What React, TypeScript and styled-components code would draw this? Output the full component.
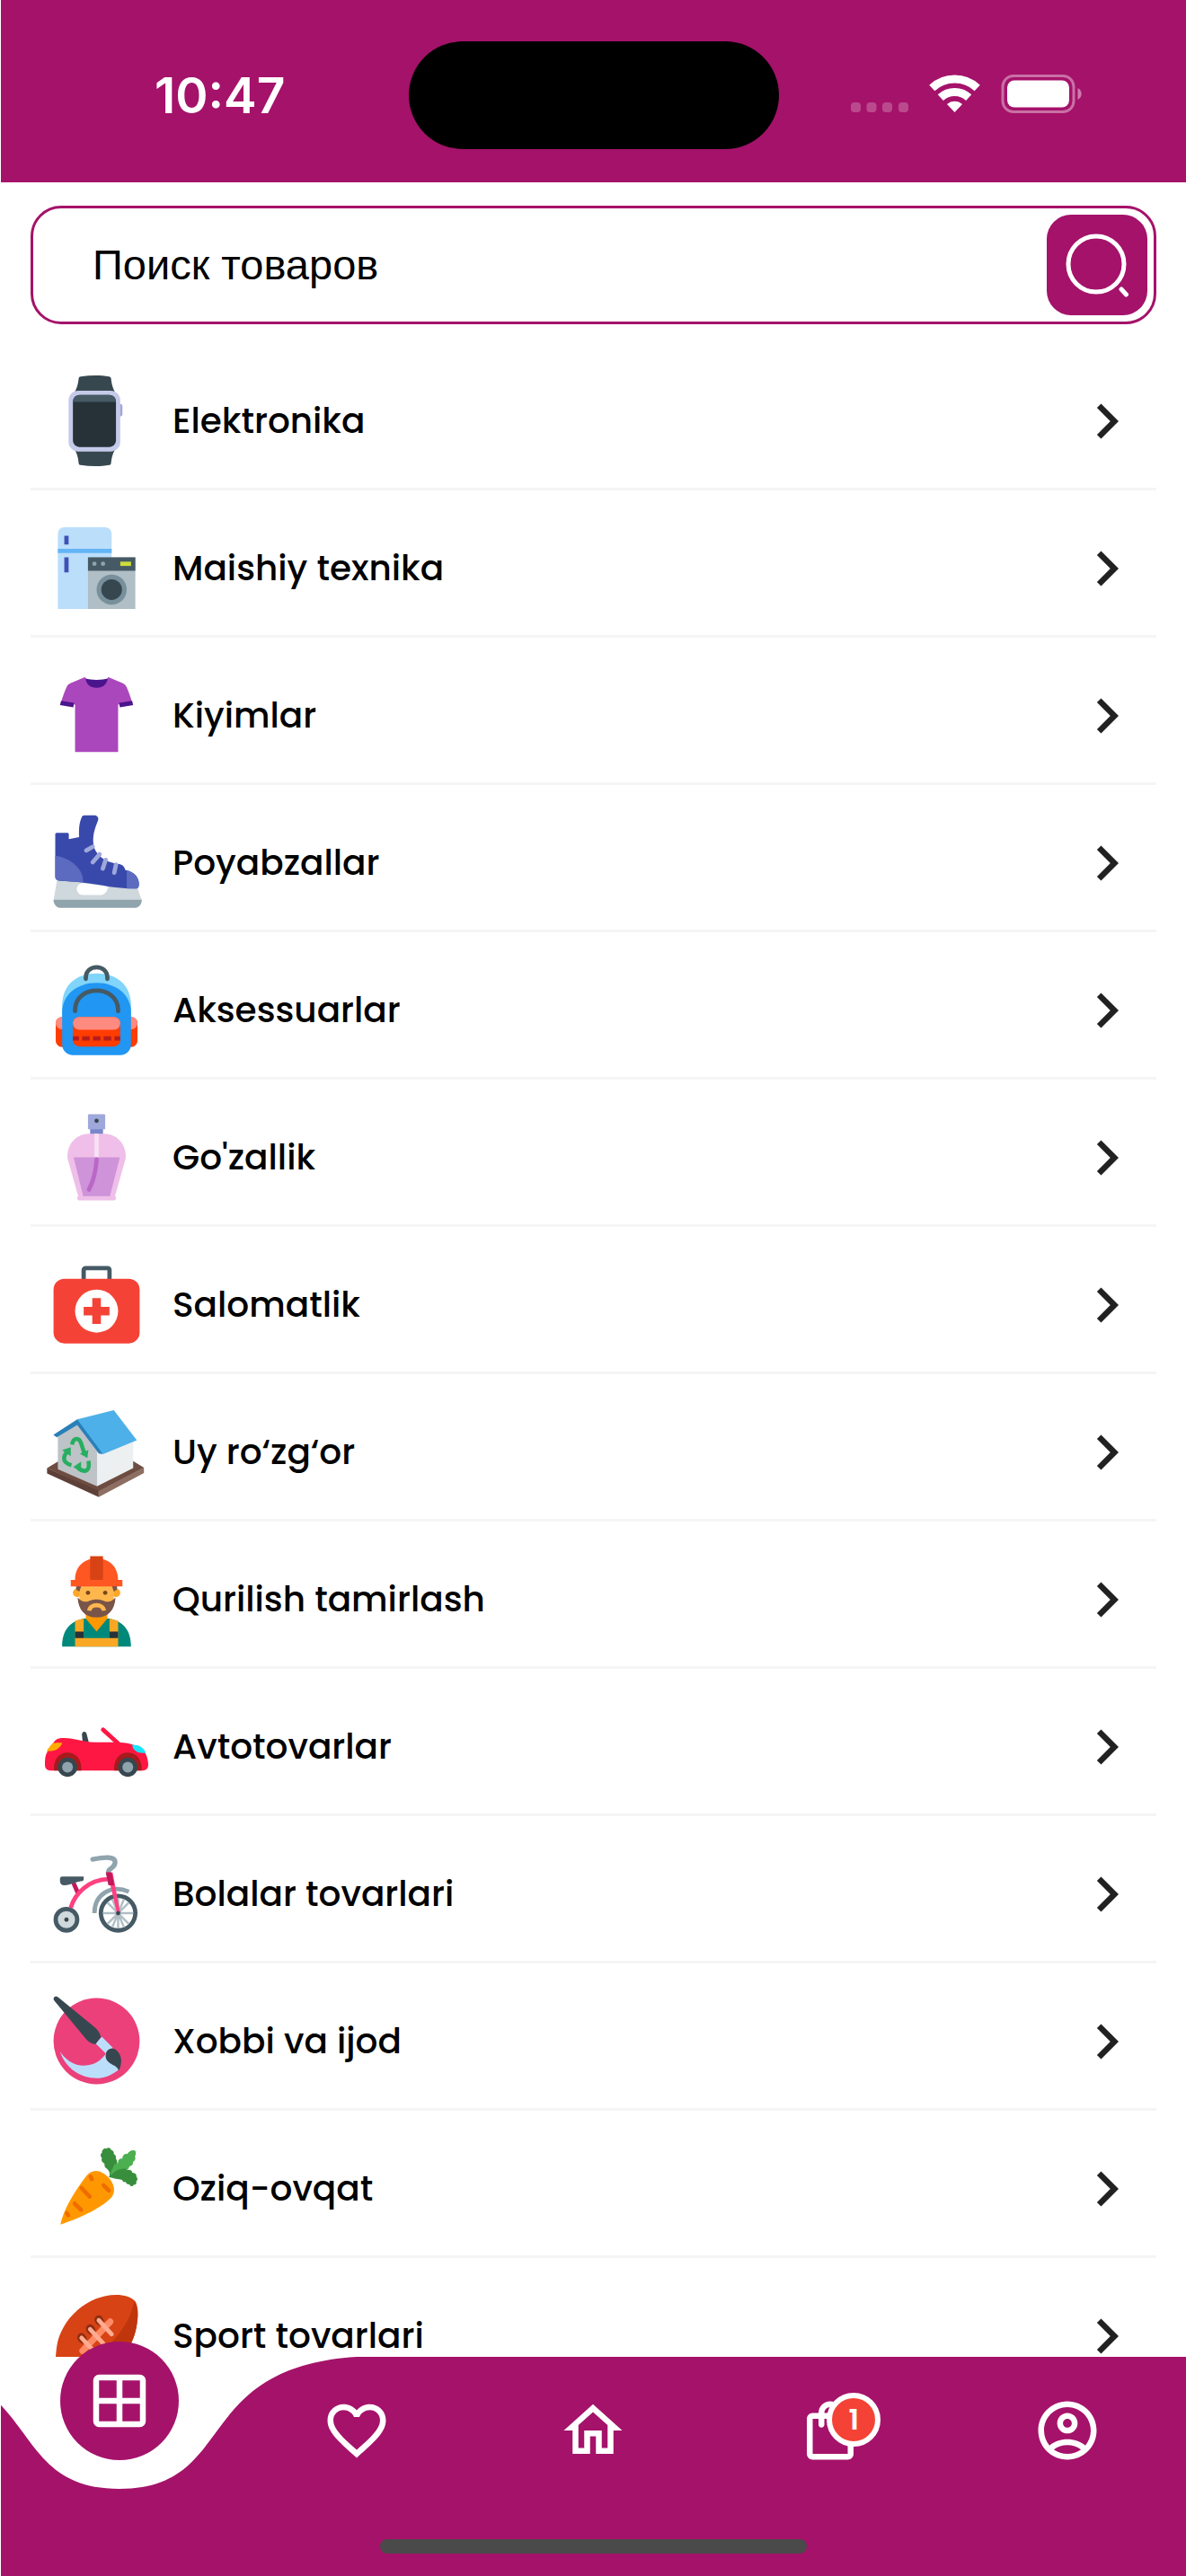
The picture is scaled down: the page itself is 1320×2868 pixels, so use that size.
import React from "react";
import styled, { createGlobalStyle } from "styled-components";

const brand = "#a5126a";

const GlobalStyle = createGlobalStyle`
  * { box-sizing: border-box; }
  body {
    margin: 0;
    background: #ffffff;
    font-family: Poppins, Inter, "Open Sans", sans-serif;
    color: #000000;
  }
`;

const Screen = styled.div`
  display: flex;
  flex-direction: column;
  height: 100vh;
  padding-left: 1px;
  overflow: hidden;
`;

const StatusBar = styled.header`
  display: grid;
  grid-template-columns: 1fr 412px 1fr;
  align-items: center;
  flex: none;
  padding: 46px 0 37px;
  background: ${brand};
`;

const Clock = styled.time`
  padding-left: 171px;
  font-family: Inter, sans-serif;
  font-size: 55px;
  font-weight: 600;
  line-height: 64px;
  color: #ffffff;
`;

const Island = styled.div`
  height: 120px;
  border-radius: 60px;
  background: #000000;
`;

const StatusIcons = styled.svg`
  justify-self: end;
  width: 257px;
  height: 46px;
  margin-right: 116px;
`;

const SearchForm = styled.form`
  display: flex;
  align-items: center;
  flex: none;
  margin: 26px 33px 0;
  padding: 7px 7px 7px 66px;
  border: 3px solid ${brand};
  border-radius: 34px;
`;

const SearchInput = styled.input`
  flex: 1;
  min-width: 0;
  padding: 0;
  border: 0;
  outline: 0;
  background: transparent;
  font-family: "Liberation Sans", Arial, sans-serif;
  font-size: 47px;
  line-height: 56px;
  color: #000000;

  &::placeholder {
    color: #000000;
    opacity: 1;
  }
`;

const SearchButton = styled.button`
  display: grid;
  place-items: center;
  flex: none;
  width: 112px;
  height: 112px;
  padding: 0;
  border: 0;
  border-radius: 27px;
  background: ${brand};
  cursor: pointer;
`;

const CategoryList = styled.ul`
  flex: 1;
  min-height: 0;
  margin: 21px 33px 0;
  padding: 0;
  list-style: none;
  overflow-y: auto;
  scrollbar-width: none;
`;

const CategoryLink = styled.a`
  display: flex;
  align-items: center;
  gap: 27px;
  height: 164px;
  padding: 12px 16px 0;
  border-bottom: 3px solid #f5f5f5;
  color: inherit;
  text-decoration: none;
`;

const CategoryIcon = styled.svg`
  flex: none;
  width: 115px;
  height: 115px;
`;

const CategoryName = styled.span`
  flex: 1;
  font-size: 39px;
  font-weight: 500;
  line-height: 56px;
`;

const Glyph = styled.svg<{ $color?: string }>`
  display: block;
  flex: none;
  width: 78px;
  height: 78px;
  fill: ${(p) => p.$color ?? "#ffffff"};
`;

const TabBar = styled.nav`
  position: relative;
  flex: none;
  height: 244px;
  background: #ffffff;
`;

const Wave = styled.svg`
  position: absolute;
  inset: 0;
  width: 100%;
  height: 100%;
  fill: ${brand};
`;

const Tabs = styled.div`
  position: relative;
  display: grid;
  grid-template-columns: repeat(5, 1fr);
  height: 164px;
`;

const Tab = styled.button`
  position: relative;
  display: grid;
  place-items: center;
  padding: 0;
  border: 0;
  background: transparent;
  cursor: pointer;
`;

const Bubble = styled.span`
  position: absolute;
  top: -17px;
  left: calc(50% - 66px);
  display: grid;
  place-items: center;
  width: 132px;
  height: 132px;
  border-radius: 50%;
  background: ${brand};
`;

const Badge = styled.span`
  position: absolute;
  top: 40px;
  left: calc(50% - 4px);
  display: grid;
  place-items: center;
  width: 60px;
  height: 60px;
  border: 6px solid #ffffff;
  border-radius: 50%;
  background: #f44336;
  font-family: Poppins, Inter, sans-serif;
  font-size: 32px;
  font-weight: 600;
  line-height: 48px;
  color: #ffffff;
`;

const HomeIndicator = styled.div`
  position: relative;
  width: 36%;
  height: 16px;
  margin: 39px auto 0;
  border-radius: 8px;
  background: #4a4a4a;
`;

const Watch = () => (
  <>
    <path fill="#37474f" d="M16 4.2c.1-.5.4-.7.9-.8 4.500-.7 9.500-.7 13.200 0 .5.100.800.400.9.800.3 2.800.7 4.300 2 6.800H14c1.300-2.500 1.700-4 2-6.800zM16 43.800c.1.500.4.700.9.800 4.500.7 9.500.7 13.200 0 .5-.1.800-.4.9-.8.3-2.800.7-4.300 2-6.800H14c1.300 2.500 1.700 4 2 6.800z" transform="translate(-.3)" />
    <rect x="33" y="16.200" width="3" height="5.800" rx="1" fill="#9fa8da" />
    <rect x="11" y="10" width="24" height="28.300" rx="4.500" fill="#c5cae9" />
    <rect x="13" y="12" width="20" height="24.200" rx="3" fill="#263238" />
    <path fill="#455a64" d="M16 12h14c1.500 0 2.800 1.200 3 3.200H13c.2-2 1.500-3.200 3-3.200z" />
  </>
);

const Appliances = () => (
  <>
    <path fill="#bbdefb" d="M9 5h19a3 3 0 0 1 3 3v35H6V8a3 3 0 0 1 3-3z" />
    <path fill="#64b5f6" d="M6 15h25v2H6z" />
    <path fill="#3f51b5" d="M9 9h2v4H9zM9 19h2v7H9z" />
    <path fill="#b0bec5" d="M20 19h22v24H20z" />
    <path fill="#455a64" d="M20 19h22v6.200H20z" />
    <circle cx="23" cy="22" r="1" fill="#90a4ae" />
    <circle cx="27" cy="22" r="1" fill="#90a4ae" />
    <path fill="#cddc39" d="M35 21h5v2h-5z" />
    <circle cx="31" cy="34" r="7" fill="#78909c" />
    <circle cx="31" cy="34" r="4.800" fill="#37474f" />
  </>
);

const Shirt = () => (
  <>
    <path fill="#4a148c" d="M18.700 6.800c3 .9 7.600.9 10.600 0L29 13H19z" />
    <path fill="#ab47bc" d="M18.700 6.200 12 9c-1 .4-1.600 1-2 2-1 2.300-2 5-2.500 7l6.500 1v22h20V19l6.500-1c-.5-2-1.500-4.700-2.500-7-.4-1-1-1.600-2-2l-6.700-2.800C29 9.500 27 11.200 24 11.200S19 9.500 18.700 6.200z" />
    <path fill="#4a148c" d="m7.500 17.200 6 1-.3 2-6.200-1zM40.500 17.200l-6 1 .3 2 6.200-1z" />
  </>
);

const Skate = () => (
  <>
    <path fill="#cfd8dc" fillRule="evenodd" d="M5.800 31 4 41.500h41L42.700 35zM17.500 33.500a2.700 2.700 0 0 0 0 5.500h8.800c1.500 0 3-2 3-4z" />
    <path fill="#90a4ae" d="M4 41.200h41c0 2.300-1.500 3.800-3.500 3.800h-34C5.500 45 4 43.500 4 41.200z" />
    <path fill="#3949ab" d="M5.500 10.100h5c.4 0 .6.300.6.800V13l4.800-.9c-.2-3.500 0-6.700 1.200-9.300.3-.5.700-.8 1.200-.8H23c1.300 0 2.100 1.100 1.700 2.300C23 8.500 22.200 11.300 22.500 15c.4 5 5.500 9 12 9.600 1.500.2 2.400 1.200 2.900 2.800 3.800.6 6.300 3.100 6.300 6.500 0 1-.4 2.100-1 2.100-8 0-12-.8-18-1.800C18 33 12 32.700 6.600 32.300c-1 0-1.800-.6-1.800-1.600V10.900c0-.5.200-.8.700-.8z" />
    <path fill="#5c6bc0" d="M4.800 20.800c7 1 13.200 6 13 12.300L6.600 32.300c-1 0-1.800-.6-1.800-1.600zM38 27.500c3.300.7 5.700 3.100 5.700 6.400 0 1-.4 2.100-1 2.100H38z" />
    <path fill="none" stroke="#9fa8da" strokeWidth="2" strokeLinecap="round" d="m19.200 18.300 3-1.700M22.200 23.800l3.200-3.700M26.900 26.700l1.300-4M32.200 28.600l.8-3.700" />
  </>
);

const Backpack = () => (
  <>
    <path fill="#ff3d00" d="M8 27.200h32c1.700 0 3 1.300 3 3v8c0 1.700-1.300 3-3 3H8c-1.700 0-3-1.300-3-3v-8c0-1.700 1.300-3 3-3z" />
    <path fill="#ff8a80" d="M8 27.200h32c1.700 0 3 1.300 3 3 0 1.500-1.300 2.800-3 2.800H8c-1.700 0-3-1.300-3-2.800 0-1.700 1.300-3 3-3z" />
    <path fill="#81d4fa" d="M8 22C8 12 15 7 24 7s16 5 16 15v6H8z" />
    <path fill="#2196f3" d="M8 25c0-8 7-13.600 16-13.600S40 17 40 25v15c0 2.800-2.200 5-5 5H13c-2.800 0-5-2.200-5-5z" />
    <path fill="none" stroke="#455a64" strokeWidth="2" strokeLinecap="round" d="M19 9.500v-.5c0-6.500 10-6.500 10 0v.5M14 24.500V24c0-12 20-12 20 0v.5" />
    <rect x="13" y="27.200" width="22" height="13.800" rx="3" fill="#ff3d00" />
    <rect x="13" y="27.200" width="22" height="6" rx="3" fill="#ff8a80" />
    <path stroke="#b71c1c" strokeWidth="2" strokeDasharray="3.500 1.500" strokeDashoffset=".7" d="M13 37.200h22" />
  </>
);

const Perfume = () => (
  <>
    <path fill="#7986cb" d="M21 10h6v4h-6z" />
    <rect x="20" y="4" width="8" height="7" rx=".5" fill="#9fa8da" />
    <circle cx="24" cy="7" r="1" fill="#37474f" />
    <path fill="#efbfe9" d="M20.500 13h7c6 0 10.500 5 10 11.500L33 40.500 32.500 42c.5 0 .5.500.5 1s-.3 1-1 1H16c-.7 0-1-.5-1-1s0-1 .5-1l-.5-1.500-4.500-16C10 18 14.500 13 20.500 13z" />
    <path fill="#f8e1f5" d="M23 13h2v11h-2z" />
    <path fill="#ce93d8" d="M13.300 24h21.500L30.200 42H17.800z" />
    <path fill="none" stroke="#ba68c8" strokeWidth="2" strokeLinecap="round" d="M24 25c-.3 5.500-1.500 10-3.500 14" />
  </>
);

const FirstAid = () => (
  <>
    <path fill="none" stroke="#455a64" strokeWidth="2" d="M18 13V8c0-.6.400-1 1-1h10c.6 0 1 .4 1 1v5" />
    <rect x="4" y="12" width="40" height="30" rx="5" fill="#f44336" />
    <circle cx="24" cy="27" r="10" fill="#ffffff" />
    <path fill="#f44336" d="M22 21h4v4h4v4h-4v4h-4v-4h-4v-4h4z" />
  </>
);

const House = () => (
  <>
    <path fill="#6d4c41" d="m1 31.500 5-3 35-.2 5 3-21 11.200z" />
    <path fill="#5d4037" d="M1 31.500 25 42v3L1 34z" />
    <path fill="#8d6e63" d="m25 42.200 21-11v2.600L25 45z" />
    <path fill="#bdc3c7" d="m6 16.700 9-6 9.200 13V40L6 32z" />
    <path fill="#ecf0f1" d="m24.200 23 16.800-5v13.500L24.200 40z" />
    <path fill="#2980b9" d="M3.900 16.100 15 8.900h2L27 25l-2-.3-10-13.200-9.500 5.700z" />
    <path fill="#4eb0e8" d="M15 8.900 32 4.600l10.700 14L27 25z" />
    <g fill="none" stroke="#27ae60" strokeWidth="1.900">
      <path d="M12.600 20.600c.6-3.400 3.300-3.400 4.200-.600l1.500 4.600" />
      <path d="M12.300 30.200c-4-1.200-4.200-3.500-2-6.400" />
      <path d="M20.200 28.200c.9 4.500-1.400 5.800-4.700 3.400" />
    </g>
    <path fill="#27ae60" d="m16.200 24.800 4-1.700-.5 3.700zM8 23.200l4-1.400v4.200zM16.800 28.500v5L13.200 31z" />
  </>
);

const Builder = () => (
  <>
    <path fill="#ff9800" d="M19 29h10v6l-5 5-5-5z" />
    <path fill="#00897b" d="M18 33c-7 1.500-10 6-10 13h32c0-7-3-11.500-10-13h-1l-5 6-5-6z" />
    <path fill="#f9a825" d="m14 34 4-1v9h12v-9l4 1v12H14z" />
    <path fill="#263238" d="M14 39h4v3h-4zM30 39h4v3h-4z" />
    <circle cx="15" cy="21" r="2" fill="#ffa726" />
    <circle cx="33" cy="21" r="2" fill="#ffa726" />
    <path fill="#ffb74d" d="M16 17h16v7c0 5-3 8-8 8s-8-3-8-8z" />
    <path fill="#795548" d="M14.500 17.500H17L16 20.500l-1.500-1zM33.500 17.500H31l1 3 1.500-1zM15.200 23.200c2 2.200 3.500 2.300 5.300 1.600 2-.9 5-.9 7 0 1.800.700 3.300.600 5.300-1.600C32.500 29 29.500 32.500 24 32.500S15.500 29 15.200 23.200z" />
    <path fill="none" stroke="#ffb74d" strokeWidth="2" d="M20.600 29.300c.4-3.400 6.400-3.400 6.800 0" />
    <circle cx="20" cy="21" r="1" fill="#784719" />
    <circle cx="28" cy="21" r="1" fill="#784719" />
    <path fill="#ff5722" d="M12 15h2c0-6.500 4.500-10 10-10s10 3.500 10 10h2v3H12z" />
    <path fill="#d84315" d="M21 4h6v11h-6z" />
  </>
);

const Car = () => (
  <>
    <path fill="#37474f" d="M17.200 18.500c0-1.800 2-1.800 2.200-.2l1.100 4.200-3-.6z" />
    <path stroke="#ff1744" strokeWidth="2" strokeLinecap="round" d="m27 16.200 7 6.300" />
    <path fill="#ff1744" d="M4.500 21.500c1-1.300 2.500-1.500 4.500-1.500 5 0 8 1.800 14 2h10c5 .2 8.500.8 12 3 2 1.500 3 5 3 7.500 0 1.800-1 2.700-2.500 2.700h-43C1 35.200 0 34.300 0 32.500c0-4 .3-5 2.300-8z" />
    <path fill="#a81a1c" d="M4.200 35.200c-.4-5 2.100-8.400 6.300-8.400s6.800 3.400 6.400 8.400zM32.200 35.200c-.4-5 2.100-8.400 6.300-8.400s6.800 3.400 6.400 8.400z" />
    <path fill="#ffab00" d="M3.300 22.600c2-.5 3.500-.4 4.700-.3-.8 2.500-3.500 4.200-7.300 3.800z" />
    <path fill="#18e5ff" d="M40.600 23.200c3 .1 5 .8 6.300 3.800-3.500.4-6.300-1-6.300-3.800z" />
    <circle cx="10.500" cy="33.600" r="4.500" fill="#37474f" />
    <circle cx="38.500" cy="33.600" r="4.500" fill="#37474f" />
    <circle cx="10.500" cy="33.600" r="2.500" fill="#90a4ae" />
    <circle cx="38.500" cy="33.600" r="2.500" fill="#90a4ae" />
  </>
);

const Tricycle = () => (
  <>
    <path fill="none" stroke="#90a4ae" strokeWidth="2" d="M23 33c0-9 8-13.500 16-10" />
    <circle cx="34" cy="33" r="8" fill="#ffffff" stroke="#455a64" strokeWidth="2" />
    <path fill="none" stroke="#b0bec5" strokeWidth="1" d="M34 26v14M27 33h14M29 28l10 10M29 38l10-10M31.300 26.500l5.400 13M31.300 39.500l5.400-13" />
    <circle cx="10" cy="36" r="5" fill="#cfd8dc" stroke="#455a64" strokeWidth="2" />
    <circle cx="10" cy="36" r="1" fill="#37474f" />
    <path stroke="#c2185b" strokeWidth="2" d="m13.300 19 2.200 5" />
    <path fill="none" stroke="#ff4081" strokeWidth="2" d="M12 30.500c2-7 8.500-13 17.500-13.300" />
    <path fill="none" stroke="#90a4ae" strokeWidth="2.200" strokeLinecap="round" d="M22.200 8c3-.6 5-1 7.500-.8 4 .3 3.300 3.300 1.300 4.800-1.500 1-1.800 1.500-1.500 3" />
    <path fill="#ff4081" d="m29 14 2.500.2L35 33l-1.500.2z" />
    <path fill="#c2185b" d="M28.300 14h2.700l1.200 6h-2.700z" />
    <circle cx="34" cy="33" r="1" fill="#37474f" />
    <path fill="#455a64" d="M8 16h10v1.200c0 .5-.4.800-.8.900-3 .4-5 1.900-8.200 1.900-1.300 0-2-.8-2-2v-1c0-.6.400-1 1-1z" />
  </>
);

const Brush = () => (
  <>
    <circle cx="24" cy="24" r="20" fill="#ec407a" />
    <path fill="#bbdefb" d="M7 28.900c4 5.600 8.500 7 13 6.300 5-.8 8-4.200 9-7L34.500 37C31 40 27.500 41.200 24 41.200c-8 0-14.500-5-17-12.300z" />
    <path fill="#bbdefb" d="m23.500 25 3-3 5 5-2.800 3.200z" />
    <path fill="#37474f" d="M4.200 5C3.500 3.800 5 2.500 6.200 3.700L22.500 17c2 1.600 3 3 3.500 5l-2.500 3.500c-2-.3-3.700-1.500-4.800-3z" />
    <path fill="#37474f" d="M28.200 31c0-3.500 3.300-4.500 5.300-2.500 2.700 2.700 2.200 6.500.8 9.200-.8-3-5.800-2.700-6.100-6.700z" />
  </>
);

const Carrot = () => (
  <>
    <path fill="#388e3c" d="M30 18.500c.3-1.500 0-2.500-1-3.500-1.600-1-1.300-2-1.300-2.500-1.300-.8-1.700-1.700-1.200-2.500-1-1.400-.6-2.200 0-2.500-.1-1.500 1-2.200 2-2 1-.7 2-.3 2.200.6 1 .3 1.500 1 1.300 1.900 1 .5 1.200 1.400.9 2 .9 1.200.8 2.500.3 3.500L32 17z" />
    <path fill="#4caf50" d="M30.500 18c-.2-1.500.3-2.500 1.200-3.500 0-1.500 1.300-2.200 2.300-2.300-.2-1.300.8-2.200 2-2 0-1.500 1-2.500 2.300-2.200.7-1.500 2.500-2.200 3.700-1.500.4 1.200.2 2-.2 2.700.6 1-.1 2-.9 2.500.2 1.200-.7 2-1.700 2 0 1.200-1 1.900-2.200 1.700-.5 1.100-2 1.400-3 1.200z" />
    <path fill="#388e3c" d="M29.500 18.700c2-1.800 4-3.700 6-3.700 1.500-.6 2.300-.2 2.800.4 1.500-.2 2.300.5 2.300 1.300 1.600.1 2.100.9 1.800 1.700 1 1.200.5 2 0 2.300.4 1.200-.4 1.700-1.200 1.600-.5 1-1.500.8-2-.3-1 .3-1.600-.4-1.600-1-1.200.2-1.600-.5-1.700-1-2-.3-3.900-.6-6.400-1.300z" />
    <path fill="#ff9800" d="M7.200 40.800c1.200-5.800 5-13.300 12-22.500 1.800-2.500 5-3.500 8.500-1 4 2.900 5.800 7.500 3.300 10.800-4 4.500-14 9.500-23.800 12.700z" />
    <path fill="none" stroke="#ef6c00" strokeWidth="1.900" strokeLinecap="round" d="m21.200 18.500.6 1.200M17 23.800l3.800 4M27.200 22.500l2.500 2.500M13.800 31l3 3M10.200 35.500l.6 1" />
  </>
);

const Football = () => (
  <>
    <path fill="#d84315" d="M33 5c4 0 7 1 9 3 1.500 2.500 1.500 7 .5 12C40 33 30 43 15 43c-4 0-7-.5-8.500-2C4.500 38.500 4.800 34 5.500 29 7.500 16 20 5 33 5z" />
    <path fill="#bf360c" d="M41.500 8C43.500 11 43.300 15.500 42.500 20 40 33 30 43 15 43c-4 0-7-.5-8.500-2C21 38 38 25 41.500 8z" />
    <path fill="none" stroke="#8d2f12" strokeWidth="4" strokeLinecap="round" d="m25 16.500.5.8M21 20.700l.5.800M17 24.800l.5.800" />
    <path stroke="#ff8a65" strokeWidth="3" strokeLinecap="round" d="M30.300 17.500 17.500 31" />
    <path stroke="#ffab91" strokeWidth="2" strokeLinecap="round" d="m25 16.800 6 6.500M21 21l6 6.500M17 25l6 6.500" />
  </>
);

const categories: { name: string; Icon: () => React.JSX.Element }[] = [
  { name: "Elektronika", Icon: Watch },
  { name: "Maishiy texnika", Icon: Appliances },
  { name: "Kiyimlar", Icon: Shirt },
  { name: "Poyabzallar", Icon: Skate },
  { name: "Aksessuarlar", Icon: Backpack },
  { name: "Go'zallik", Icon: Perfume },
  { name: "Salomatlik", Icon: FirstAid },
  { name: "Uy ro‘zg‘or", Icon: House },
  { name: "Qurilish tamirlash", Icon: Builder },
  { name: "Avtotovarlar", Icon: Car },
  { name: "Bolalar tovarlari", Icon: Tricycle },
  { name: "Xobbi va ijod", Icon: Brush },
  { name: "Oziq-ovqat", Icon: Carrot },
  { name: "Sport tovarlari", Icon: Football },
];

const glyphs = {
  chevron: "M8.590 16.590 13.170 12 8.590 7.410 10 6l6 6-6 6z",
  grid: "M5 3h14a2 2 0 0 1 2 2v14a2 2 0 0 1-2 2H5a2 2 0 0 1-2-2V5a2 2 0 0 1 2-2zm0 2v6h6V5zm8 0v6h6V5zm-8 8v6h6v-6zm8 0v6h6v-6z",
  heart:
    "M16.500 3c-1.740 0-3.410.810-4.500 2.090C10.910 3.810 9.240 3 7.500 3 4.420 3 2 5.420 2 8.500c0 3.780 3.400 6.860 8.550 11.540L12 21.350l1.450-1.320C18.600 15.360 22 12.280 22 8.500 22 5.420 19.580 3 16.500 3zm-4.400 15.550-.1.100-.1-.1C7.140 14.240 4 11.390 4 8.500 4 6.500 5.500 5 7.500 5c1.540 0 3.040.990 3.570 2.360h1.870C13.460 5.990 14.960 5 16.500 5c2 0 3.500 1.500 3.500 3.500 0 2.890-3.140 5.740-7.900 10.050z",
  home: "M12 5.690l5 4.500V18h-2v-6H9v6H7v-7.810l5-4.500M12 3 2 12h3v8h6v-6h2v6h6v-8h3L12 3z",
  bag: "M18 6h-2c0-2.210-1.790-4-4-4S8 3.790 8 6H6c-1.100 0-2 .9-2 2v12c0 1.100.9 2 2 2h12c1.100 0 2-.9 2-2V8c0-1.100-.9-2-2-2zm-6-2c1.100 0 2 .9 2 2h-4c0-1.100.9-2 2-2zm6 16H6V8h2v2c0 .55.450 1 1 1s1-.45 1-1V8h4v2c0 .55.450 1 1 1s1-.45 1-1V8h2v12z",
  account:
    "M12 2C6.480 2 2 6.480 2 12s4.480 10 10 10 10-4.480 10-10S17.520 2 12 2zM7.350 18.500C8.660 17.560 10.260 17 12 17s3.340.560 4.650 1.500c-1.310.940-2.910 1.500-4.650 1.500s-3.340-.56-4.650-1.500zm10.790-1.380C16.450 15.800 14.320 15 12 15s-4.450.8-6.140 2.120C4.700 15.730 4 13.950 4 12c0-4.420 3.580-8 8-8s8 3.580 8 8c0 1.950-.7 3.730-1.860 5.120zM12 6c-1.930 0-3.500 1.570-3.500 3.500S10.070 13 12 13s3.500-1.570 3.500-3.500S13.930 6 12 6zm0 5c-.83 0-1.500-.67-1.500-1.500S11.170 8 12 8s1.500.67 1.500 1.500S12.830 11 12 11z",
};

const Symbol24 = ({ name, color }: { name: keyof typeof glyphs; color?: string }) => (
  <Glyph viewBox="0 0 24 24" $color={color} aria-hidden="true">
    <path fillRule="evenodd" d={glyphs[name]} />
  </Glyph>
);

export default function App() {
  return (
    <Screen>
      <GlobalStyle />
      <StatusBar>
        <Clock>10:47</Clock>
        <Island />
        <StatusIcons viewBox="0 0 257 46" aria-hidden="true">
          <g fill="#ffffff" fillOpacity=".24">
            <rect x="0" y="31" width="11" height="11" rx="4" />
            <rect x="17.500" y="31" width="11" height="11" rx="4" />
            <rect x="35" y="31" width="11" height="11" rx="4" />
            <rect x="53" y="31" width="11" height="11" rx="4" />
          </g>
          <g fill="none" stroke="#ffffff" strokeWidth="9">
            <path d="M90.300 15a37 37 0 0 1 50.400 0" />
            <path d="M99.800 25.600a23 23 0 0 1 31.400 0" />
          </g>
          <path fill="#ffffff" d="m115.500 42-8.500-9a12.500 12.500 0 0 1 17 0z" />
          <rect x="169" y="1.500" width="79" height="40" rx="12" fill="none" stroke="#ffffff" strokeOpacity=".4" strokeWidth="3" />
          <rect x="174" y="6.500" width="69" height="30" rx="8" fill="#ffffff" />
          <path fill="#ffffff" fillOpacity=".45" d="M252.500 15c5.500 2.500 5.500 10.500 0 13z" />
        </StatusIcons>
      </StatusBar>

      <SearchForm role="search" onSubmit={(e) => e.preventDefault()}>
        <SearchInput type="text" aria-label="Поиск товаров" placeholder="Поиск товаров" />
        <SearchButton type="submit" aria-label="Поиск">
          <svg width="72" height="72" viewBox="0 0 72 72" fill="none" stroke="#ffffff" strokeWidth="5" aria-hidden="true">
            <circle cx="35" cy="35" r="31" />
            <path d="m63 63 5.500 6" strokeLinecap="round" />
          </svg>
        </SearchButton>
      </SearchForm>

      <CategoryList>
        {categories.map(({ name, Icon }) => (
          <li key={name}>
            <CategoryLink href="#">
              <CategoryIcon viewBox="0 0 48 48" aria-hidden="true">
                <Icon />
              </CategoryIcon>
              <CategoryName>{name}</CategoryName>
              <Symbol24 name="chevron" color="#212121" />
            </CategoryLink>
          </li>
        ))}
      </CategoryList>

      <TabBar>
        <Wave viewBox="0 0 1320 244" preserveAspectRatio="none" aria-hidden="true">
          <path d="M-132 0C53 12 0 147 132 147S211 12 396 0H1320V244H-132z" />
        </Wave>
        <Tabs>
          <Tab type="button" aria-label="Katalog" aria-current="page">
            <Bubble>
              <Symbol24 name="grid" />
            </Bubble>
          </Tab>
          <Tab type="button" aria-label="Sevimlilar">
            <Symbol24 name="heart" />
          </Tab>
          <Tab type="button" aria-label="Bosh sahifa">
            <Symbol24 name="home" />
          </Tab>
          <Tab type="button" aria-label="Savat">
            <Symbol24 name="bag" />
            <Badge>1</Badge>
          </Tab>
          <Tab type="button" aria-label="Profil">
            <Symbol24 name="account" />
          </Tab>
        </Tabs>
        <HomeIndicator />
      </TabBar>
    </Screen>
  );
}
